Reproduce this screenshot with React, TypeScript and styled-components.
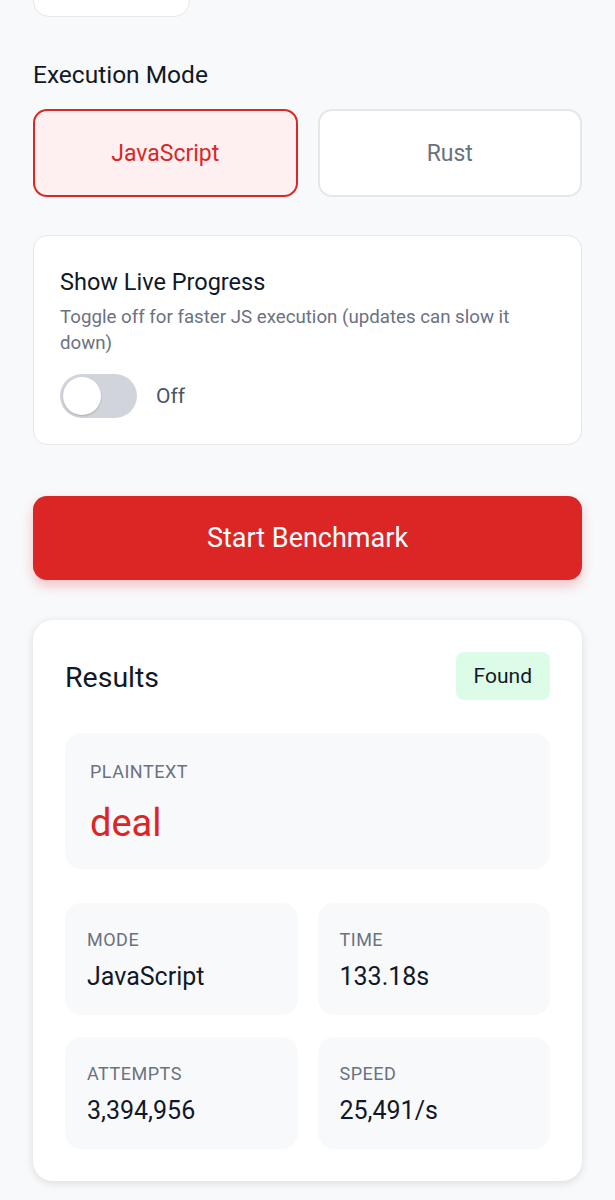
import React, { useState } from "react";
import styled, { createGlobalStyle } from "styled-components";

const GlobalStyle = createGlobalStyle`
  html, body {
    margin: 0;
    padding: 0;
    background: #f8f9fb;
    font-family: Roboto, "Noto Sans", sans-serif;
    color: #111827;
  }
`;

const Page = styled.div`
  padding: 0 33px 40px;
  display: flex;
  flex-direction: column;
`;

const TopStub = styled.div`
  width: 157px;
  height: 60px;
  margin-top: -43px;
  background: #fff;
  border: 1.5px solid #e5e7eb;
  border-radius: 16px;
  box-sizing: border-box;
`;

const SectionLabel = styled.div`
  margin-top: 43px;
  font-size: 24.5px;
  line-height: 30px;
  color: #111827;
`;

const ModeRow = styled.div`
  margin-top: 19px;
  display: grid;
  grid-template-columns: 1fr 1fr;
  gap: 20px;
`;

const ModeButton = styled.button<{ $active: boolean }>`
  height: 88px;
  border-radius: 14px;
  font-family: inherit;
  font-size: 23px;
  cursor: pointer;
  border: 2px solid ${({ $active }) => ($active ? "#dc2626" : "#e5e7eb")};
  background: ${({ $active }) => ($active ? "#fef0f0" : "#fff")};
  color: ${({ $active }) => ($active ? "#dc2626" : "#6b7280")};
`;

const SettingsCard = styled.div`
  margin-top: 38px;
  background: #fff;
  border: 1.5px solid #e5e7eb;
  border-radius: 14px;
  padding: 31px 26px 26px;
  box-sizing: border-box;
`;

const SettingTitle = styled.div`
  font-size: 23.5px;
  line-height: 30px;
  color: #111827;
`;

const SettingHint = styled.div`
  margin-top: 7px;
  font-size: 18.7px;
  line-height: 26px;
  color: #6b7280;
`;

const ToggleRow = styled.div`
  margin-top: 18px;
  display: flex;
  align-items: center;
  gap: 19px;
`;

const Track = styled.button<{ $on: boolean }>`
  position: relative;
  width: 77px;
  height: 44px;
  border: none;
  padding: 0;
  border-radius: 22px;
  background: ${({ $on }) => ($on ? "#dc2626" : "#d1d5db")};
  cursor: pointer;
`;

const Knob = styled.span<{ $on: boolean }>`
  position: absolute;
  top: 3px;
  left: ${({ $on }) => ($on ? "36px" : "3px")};
  width: 38px;
  height: 38px;
  border-radius: 50%;
  background: #fff;
  box-shadow: 0 1px 2px rgba(0, 0, 0, 0.2);
`;

const ToggleText = styled.span`
  font-size: 21px;
  color: #4b5563;
`;

const StartButton = styled.button`
  margin-top: 51px;
  height: 84px;
  border: none;
  border-radius: 14px;
  background: #dc2626;
  color: #fff;
  font-family: inherit;
  font-size: 27px;
  cursor: pointer;
  box-shadow: 0 6px 12px rgba(220, 38, 38, 0.25);
`;

const ResultsCard = styled.div`
  margin-top: 40px;
  background: #fff;
  border-radius: 20px;
  padding: 32px;
  box-shadow: 0 2px 8px rgba(0, 0, 0, 0.12);
`;

const ResultsHeader = styled.div`
  display: flex;
  justify-content: space-between;
  align-items: center;
`;

const ResultsTitle = styled.div`
  font-size: 28.5px;
  color: #111827;
  padding-top: 3px;
`;

const Badge = styled.span`
  background: #dcfce7;
  color: #111827;
  font-size: 21px;
  padding: 12px 18px;
  border-radius: 8px;
`;

const PlainBox = styled.div`
  margin-top: 33px;
  background: #f8f9fb;
  border-radius: 16px;
  padding: 28px 25px 24px;
`;

const StatLabel = styled.div`
  font-size: 18px;
  letter-spacing: 0.5px;
  color: #6b7280;
  text-transform: uppercase;
`;

const PlainValue = styled.div`
  margin-top: 19px;
  font-size: 38px;
  line-height: 44px;
  color: #dc2626;
`;

const StatGrid = styled.div`
  margin-top: 34px;
  display: grid;
  grid-template-columns: 1fr 1fr;
  gap: 22px 20px;
`;

const StatBox = styled.div`
  background: #f8f9fb;
  border-radius: 16px;
  padding: 26px 22px 24px;
  height: 112px;
  box-sizing: border-box;
`;

const StatValue = styled.div`
  margin-top: 12px;
  font-size: 25px;
  color: #111827;
`;

const stats = [
  { label: "Mode", value: "JavaScript" },
  { label: "Time", value: "133.18s" },
  { label: "Attempts", value: "3,394,956" },
  { label: "Speed", value: "25,491/s" },
];

export default function App() {
  const [mode, setMode] = useState<"js" | "rust">("js");
  const [live, setLive] = useState(false);

  return (
    <>
      <GlobalStyle />
      <Page>
        <TopStub />
        <SectionLabel>Execution Mode</SectionLabel>
        <ModeRow>
          <ModeButton $active={mode === "js"} onClick={() => setMode("js")}>
            JavaScript
          </ModeButton>
          <ModeButton $active={mode === "rust"} onClick={() => setMode("rust")}>
            Rust
          </ModeButton>
        </ModeRow>

        <SettingsCard>
          <SettingTitle>Show Live Progress</SettingTitle>
          <SettingHint>
            Toggle off for faster JS execution (updates can slow it down)
          </SettingHint>
          <ToggleRow>
            <Track $on={live} onClick={() => setLive(!live)}>
              <Knob $on={live} />
            </Track>
            <ToggleText>{live ? "On" : "Off"}</ToggleText>
          </ToggleRow>
        </SettingsCard>

        <StartButton>Start Benchmark</StartButton>

        <ResultsCard>
          <ResultsHeader>
            <ResultsTitle>Results</ResultsTitle>
            <Badge>Found</Badge>
          </ResultsHeader>
          <PlainBox>
            <StatLabel>Plaintext</StatLabel>
            <PlainValue>deal</PlainValue>
          </PlainBox>
          <StatGrid>
            {stats.map((s) => (
              <StatBox key={s.label}>
                <StatLabel>{s.label}</StatLabel>
                <StatValue>{s.value}</StatValue>
              </StatBox>
            ))}
          </StatGrid>
        </ResultsCard>
      </Page>
    </>
  );
}
